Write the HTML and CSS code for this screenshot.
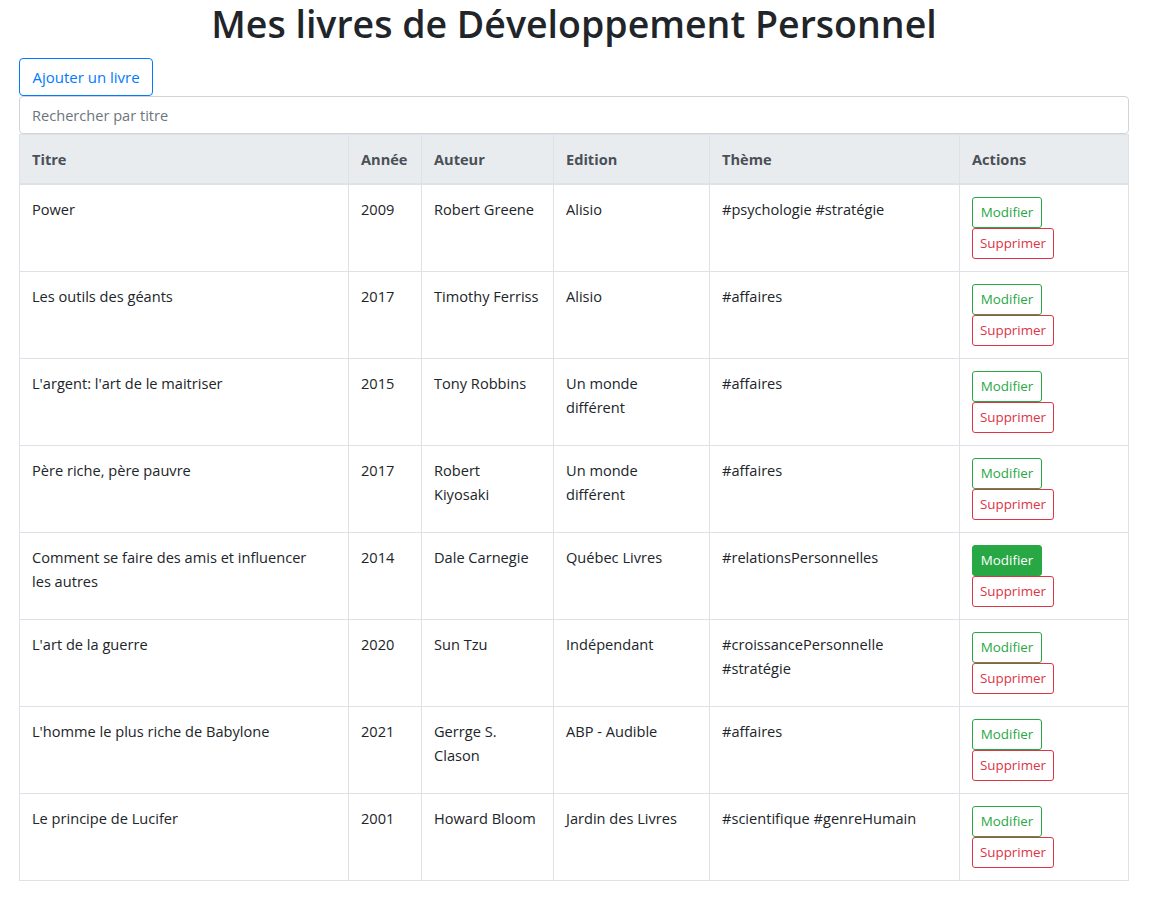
FILE: index.html
```html
<!DOCTYPE html>
<html lang="fr">
<head>
<meta charset="utf-8">
<title>Mes livres de Développement Personnel</title>
<link rel="stylesheet" href="styles.css">
</head>
<body>
<div class="container">
  <h1 class="title">Mes livres de Développement Personnel</h1>
  <button class="btn btn-outline-primary">Ajouter un livre</button>
  <input class="search" type="text" placeholder="Rechercher par titre">
  <table class="table">
    <colgroup>
      <col class="c-titre"><col class="c-annee"><col class="c-auteur"><col class="c-edition"><col class="c-theme"><col class="c-actions">
    </colgroup>
    <thead>
      <tr><th>Titre</th><th>Année</th><th>Auteur</th><th>Edition</th><th>Thème</th><th>Actions</th></tr>
    </thead>
    <tbody>
      <tr><td>Power</td><td>2009</td><td>Robert Greene</td><td>Alisio</td><td>#psychologie #stratégie</td><td><button class="btn-sm btn-outline-success">Modifier</button><button class="btn-sm btn-outline-danger">Supprimer</button></td></tr>
      <tr><td>Les outils des géants</td><td>2017</td><td>Timothy Ferriss</td><td>Alisio</td><td>#affaires</td><td><button class="btn-sm btn-outline-success">Modifier</button><button class="btn-sm btn-outline-danger">Supprimer</button></td></tr>
      <tr><td>L'argent: l'art de le maitriser</td><td>2015</td><td>Tony Robbins</td><td>Un monde différent</td><td>#affaires</td><td><button class="btn-sm btn-outline-success">Modifier</button><button class="btn-sm btn-outline-danger">Supprimer</button></td></tr>
      <tr><td>Père riche, père pauvre</td><td>2017</td><td>Robert<br>Kiyosaki</td><td>Un monde différent</td><td>#affaires</td><td><button class="btn-sm btn-outline-success">Modifier</button><button class="btn-sm btn-outline-danger">Supprimer</button></td></tr>
      <tr><td>Comment se faire des amis et influencer<br>les autres</td><td>2014</td><td>Dale Carnegie</td><td>Québec Livres</td><td>#relationsPersonnelles</td><td><button class="btn-sm btn-outline-success active">Modifier</button><button class="btn-sm btn-outline-danger">Supprimer</button></td></tr>
      <tr><td>L'art de la guerre</td><td>2020</td><td>Sun Tzu</td><td>Indépendant</td><td>#croissancePersonnelle #stratégie</td><td><button class="btn-sm btn-outline-success">Modifier</button><button class="btn-sm btn-outline-danger">Supprimer</button></td></tr>
      <tr><td>L'homme le plus riche de Babylone</td><td>2021</td><td>Gerrge S. Clason</td><td>ABP - Audible</td><td>#affaires</td><td><button class="btn-sm btn-outline-success">Modifier</button><button class="btn-sm btn-outline-danger">Supprimer</button></td></tr>
      <tr><td>Le principe de Lucifer</td><td>2001</td><td>Howard Bloom</td><td>Jardin des Livres</td><td>#scientifique #genreHumain</td><td><button class="btn-sm btn-outline-success">Modifier</button><button class="btn-sm btn-outline-danger">Supprimer</button></td></tr>
    </tbody>
  </table>
</div>
</body>
</html>
```
FILE: styles.css
```css
* { box-sizing: border-box; }
html, body { margin: 0; padding: 0; background: #fff; }
body {
  font-family: "Open Sans", "Noto Sans", sans-serif;
  font-size: 14.6px;
  line-height: 24px;
  color: #212529;
}
.container {
  padding: 0 21px 0 19px;
}
.title {
  margin: 0 0 10px 0;
  text-align: center;
  font-size: 37.5px;
  font-weight: 600;
  line-height: 48px;
  color: #212529;
}
.btn {
  display: block;
  font-family: inherit;
  font-size: 15px;
  line-height: 24px;
  height: 38px;
  padding: 6px 12px;
  border-radius: 4px;
  background: #fff;
  white-space: nowrap;
  cursor: pointer;
}
.btn-outline-primary {
  color: #007bff;
  border: 1px solid #007bff;
  width: 134px;
}
.search {
  display: block;
  width: 100%;
  height: 38px;
  margin: 0;
  padding: 6px 12px;
  font-family: inherit;
  font-size: 14.6px;
  line-height: 24px;
  color: #495057;
  border: 1px solid #ced4da;
  border-radius: 4px;
  background: #fff;
}
.search::placeholder { color: #6c757d; opacity: 1; }
.table {
  width: 100%;
  border-collapse: collapse;
  table-layout: fixed;
  color: #212529;
}
.c-titre { width: 329px; }
.c-annee { width: 73px; }
.c-auteur { width: 132px; }
.c-edition { width: 156px; }
.c-theme { width: 250px; }
.c-actions { width: 169px; }
.table th, .table td {
  border: 1px solid #dee2e6;
  padding: 12px;
  text-align: left;
  vertical-align: top;
}
.table thead th {
  background: #e9ecef;
  color: #495057;
  font-weight: 700;
  border-bottom: 2px solid #dee2e6;
  vertical-align: bottom;
}
.btn-sm {
  display: block;
  font-family: inherit;
  font-size: 13.4px;
  line-height: 21px;
  height: 31px;
  padding: 4px 6px;
  border-radius: 3px;
  background: #fff;
  white-space: nowrap;
  cursor: pointer;
}
.btn-outline-success {
  color: #28a745;
  border: 1px solid #28a745;
  width: 70px;
}
.btn-outline-success.active {
  color: #fff;
  background: #28a745;
}
.btn-outline-danger {
  color: #dc3545;
  border: 1px solid #dc3545;
  width: 82px;
}
```
